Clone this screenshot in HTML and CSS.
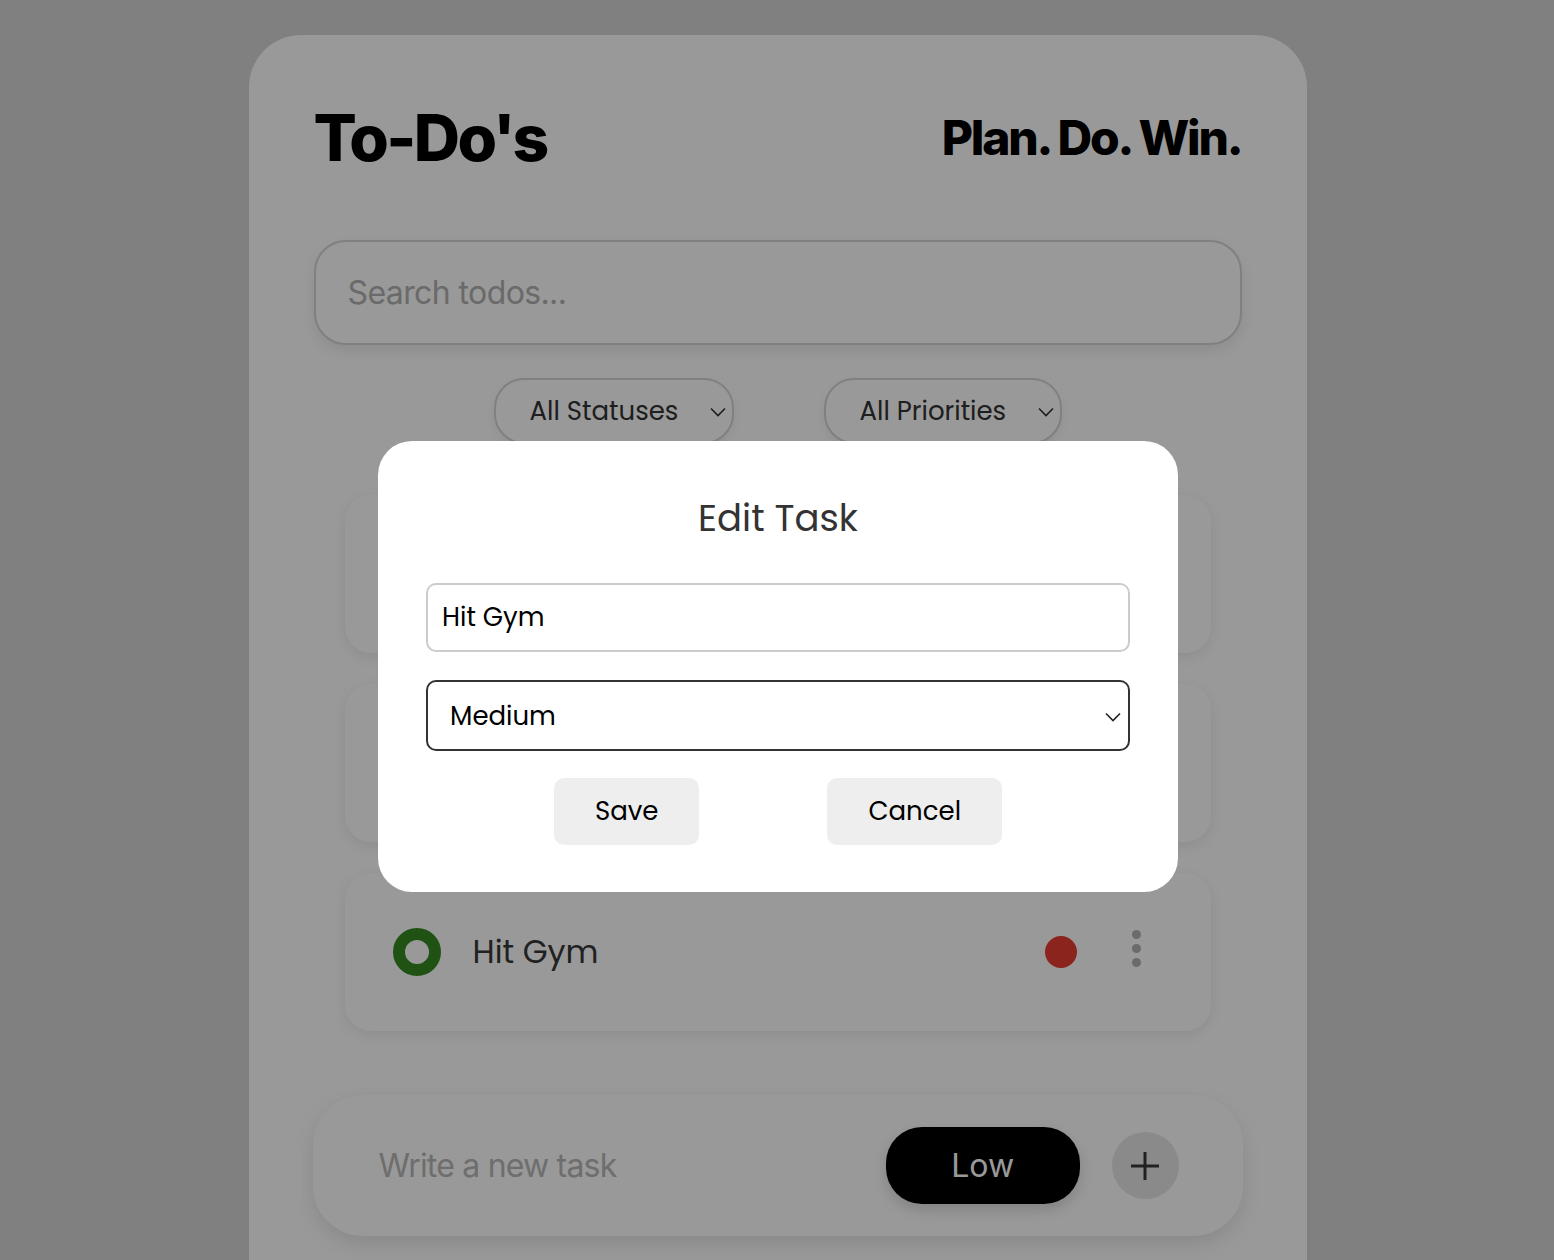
FILE: index.html
```html
<html>
<head>
  <title>To-Do's</title>
  <link rel="stylesheet" href="styles.css">
</head>
<body>
  <div class="app">
    <div class="header">
      <h1>To-Do's</h1>
      <h2>Plan. Do. Win.</h2>
    </div>

    <input class="search" type="text" placeholder="Search todos..."/>

    <div class="filters">
      <div class="pick">
        <select class="filter">
          <option>All Statuses</option>
        </select>
        <svg class="chev" width="16" height="10" viewBox="0 0 16 10"><path d="M1 1.5 L8 8.5 L15 1.5" fill="none" stroke="#333" stroke-width="1.6"/></svg>
      </div>
      <div class="pick">
        <select class="filter narrow">
          <option>All Priorities</option>
        </select>
        <svg class="chev" width="16" height="10" viewBox="0 0 16 10"><path d="M1 1.5 L8 8.5 L15 1.5" fill="none" stroke="#333" stroke-width="1.6"/></svg>
      </div>
    </div>

    <div class="list">
      <div class="todo">
        <span class="ring"></span>
        <span class="name">Read a book</span>
        <span class="prio low"></span>
        <span class="kebab"><i></i><i></i><i></i></span>
      </div>
      <div class="todo">
        <span class="ring"></span>
        <span class="name">Buy groceries</span>
        <span class="prio med"></span>
        <span class="kebab"><i></i><i></i><i></i></span>
      </div>
      <div class="todo">
        <span class="ring"></span>
        <span class="name">Hit Gym</span>
        <span class="prio high"></span>
        <span class="kebab"><i></i><i></i><i></i></span>
      </div>
    </div>

    <div class="add">
      <input class="new" type="text" placeholder="Write a new task"/>
      <button class="level">Low</button>
      <button class="plus">
        <svg width="30" height="30" viewBox="0 0 30 30"><path d="M15 1 V29 M1 15 H29" stroke="#383838" stroke-width="3"/></svg>
      </button>
    </div>
  </div>

  <div class="overlay">
    <div class="modal">
      <h3>Edit Task</h3>
      <input class="field" type="text" value="Hit Gym"/>
      <div class="pick">
        <select class="field sel">
          <option>Medium</option>
        </select>
        <svg class="chev" width="16" height="10" viewBox="0 0 16 10"><path d="M1 1.5 L8 8.5 L15 1.5" fill="none" stroke="#222" stroke-width="1.6"/></svg>
      </div>
      <div class="actions">
        <button class="btn save">Save</button>
        <button class="btn">Cancel</button>
      </div>
    </div>
  </div>
</body>
</html>
```

FILE: styles.css
```css
body {
  background: #d5d5d5;
  margin: 0;
  padding: 0 0 0 1px;
  font-family: "Inter", "Liberation Sans", sans-serif;
}

.app {
  width: 1058px;
  margin: 35px auto 0;
  padding: 62px 65px 80px;
  box-sizing: border-box;
  background: #fff;
  border-radius: 52px;
}

.header {
  display: flex;
  justify-content: space-between;
  align-items: center;
  height: 80px;
}
.header h1 {
  margin: 0;
  font-size: 64px;
  font-weight: 800;
  letter-spacing: -2.6px;
  color: #000;
}
.header h2 {
  margin: 0;
  font-size: 48px;
  font-weight: 800;
  letter-spacing: -2.2px;
  color: #000;
}

.search {
  display: block;
  width: 100%;
  height: 105px;
  margin-top: 63px;
  box-sizing: border-box;
  border: 2px solid #d6d6d6;
  border-radius: 32px;
  padding: 0 32px;
  font-family: "Inter", sans-serif;
  font-size: 32px;
  letter-spacing: -0.6px;
  color: #333;
  background: #fff;
  box-shadow: 0 6px 14px rgba(0,0,0,0.08);
  outline: none;
}
.search::placeholder { color: #b1b1b1; }

.filters {
  display: flex;
  justify-content: center;
  gap: 90px;
  margin-top: 33px;
}
.pick {
  position: relative;
}
.pick .chev {
  position: absolute;
  right: 8px;
  top: 50%;
  margin-top: -4px;
  pointer-events: none;
}
.filter {
  appearance: none;
  -webkit-appearance: none;
  height: 66px;
  width: 240px;
  border: 2px solid #d6d6d6;
  border-radius: 30px;
  background: #fff;
  padding: 0 34px;
  font-family: "Poppins", "Open Sans", sans-serif;
  font-size: 26px;
  color: #333;
  box-shadow: 0 4px 10px rgba(0,0,0,0.06);
}
.filter.narrow { width: 238px; }

.list {
  display: flex;
  flex-direction: column;
  gap: 31px;
  padding: 0 31px;
  margin-top: 51px;
}
.todo {
  display: flex;
  align-items: center;
  height: 158px;
  padding: 0 70px 0 48px;
  background: #fff;
  border-radius: 26px;
  box-shadow: 0 4px 14px rgba(0,0,0,0.08);
}
.ring {
  width: 48px;
  height: 48px;
  box-sizing: border-box;
  border: 12px solid #348921;
  border-radius: 50%;
}
.name {
  flex: 1;
  margin-left: 32px;
  font-family: "Poppins", "Open Sans", sans-serif;
  font-size: 32px;
  color: #383838;
}
.prio {
  width: 32px;
  height: 32px;
  border-radius: 50%;
}
.prio.high { background: #e83c30; }
.prio.med { background: #f2a93b; }
.prio.low { background: #4caf50; }
.kebab {
  display: flex;
  flex-direction: column;
  gap: 5px;
  margin: 0 0 8px 55px;
}
.kebab i {
  width: 9px;
  height: 9px;
  border-radius: 50%;
  background: #b2b2b2;
}

.add {
  display: flex;
  align-items: center;
  height: 141px;
  margin: 64px -1px 0;
  padding: 0 64px;
  background: #fff;
  border-radius: 50px;
  box-shadow: 0 8px 20px rgba(0,0,0,0.1);
}
.new {
  flex: 1;
  border: none;
  outline: none;
  background: transparent;
  font-family: "Inter", sans-serif;
  font-size: 32px;
  letter-spacing: -0.8px;
  color: #333;
}
.new::placeholder { color: #b7b7b7; }
.level {
  width: 195px;
  height: 77px;
  border: none;
  border-radius: 36px;
  background: #000;
  color: #fff;
  font-family: "Inter", sans-serif;
  font-size: 32px;
  box-shadow: 0 6px 14px rgba(0,0,0,0.15);
}
.plus {
  display: flex;
  align-items: center;
  justify-content: center;
  width: 67px;
  height: 67px;
  margin-left: 32px;
  border: none;
  border-radius: 50%;
  background: #e6e6e6;
  padding: 0;
}

.overlay {
  position: fixed;
  top: 0;
  left: 0;
  right: 0;
  bottom: 0;
  background: rgba(0,0,0,0.4);
  display: flex;
  justify-content: center;
  align-items: flex-start;
  padding: 441px 0 0 2px;
}
.modal {
  width: 800px;
  box-sizing: border-box;
  padding: 41px 48px 47px;
  background: #fff;
  border-radius: 34px;
}
.modal h3 {
  margin: 0 0 29px;
  height: 72px;
  line-height: 72px;
  text-align: center;
  font-family: "Poppins", "Open Sans", sans-serif;
  font-weight: 400;
  font-size: 37px;
  color: #333;
}
.field {
  display: block;
  width: 100%;
  height: 69px;
  box-sizing: border-box;
  border: 2px solid #ccc;
  border-radius: 10px;
  padding: 0 14px;
  font-family: "Poppins", "Open Sans", sans-serif;
  font-size: 26px;
  color: #000;
  background: #fff;
  outline: none;
}
.modal .pick { margin-top: 28px; }
.field.sel {
  appearance: none;
  -webkit-appearance: none;
  height: 71px;
  border-color: #333;
  padding: 0 22px;
}
.modal .chev { right: 9px; }
.actions {
  display: flex;
  justify-content: center;
  gap: 128px;
  margin-top: 27px;
}
.btn {
  height: 67px;
  padding: 0 41px;
  border: none;
  border-radius: 10px;
  background: #eee;
  font-family: "Poppins", "Open Sans", sans-serif;
  font-size: 26px;
  color: #000;
}
```
